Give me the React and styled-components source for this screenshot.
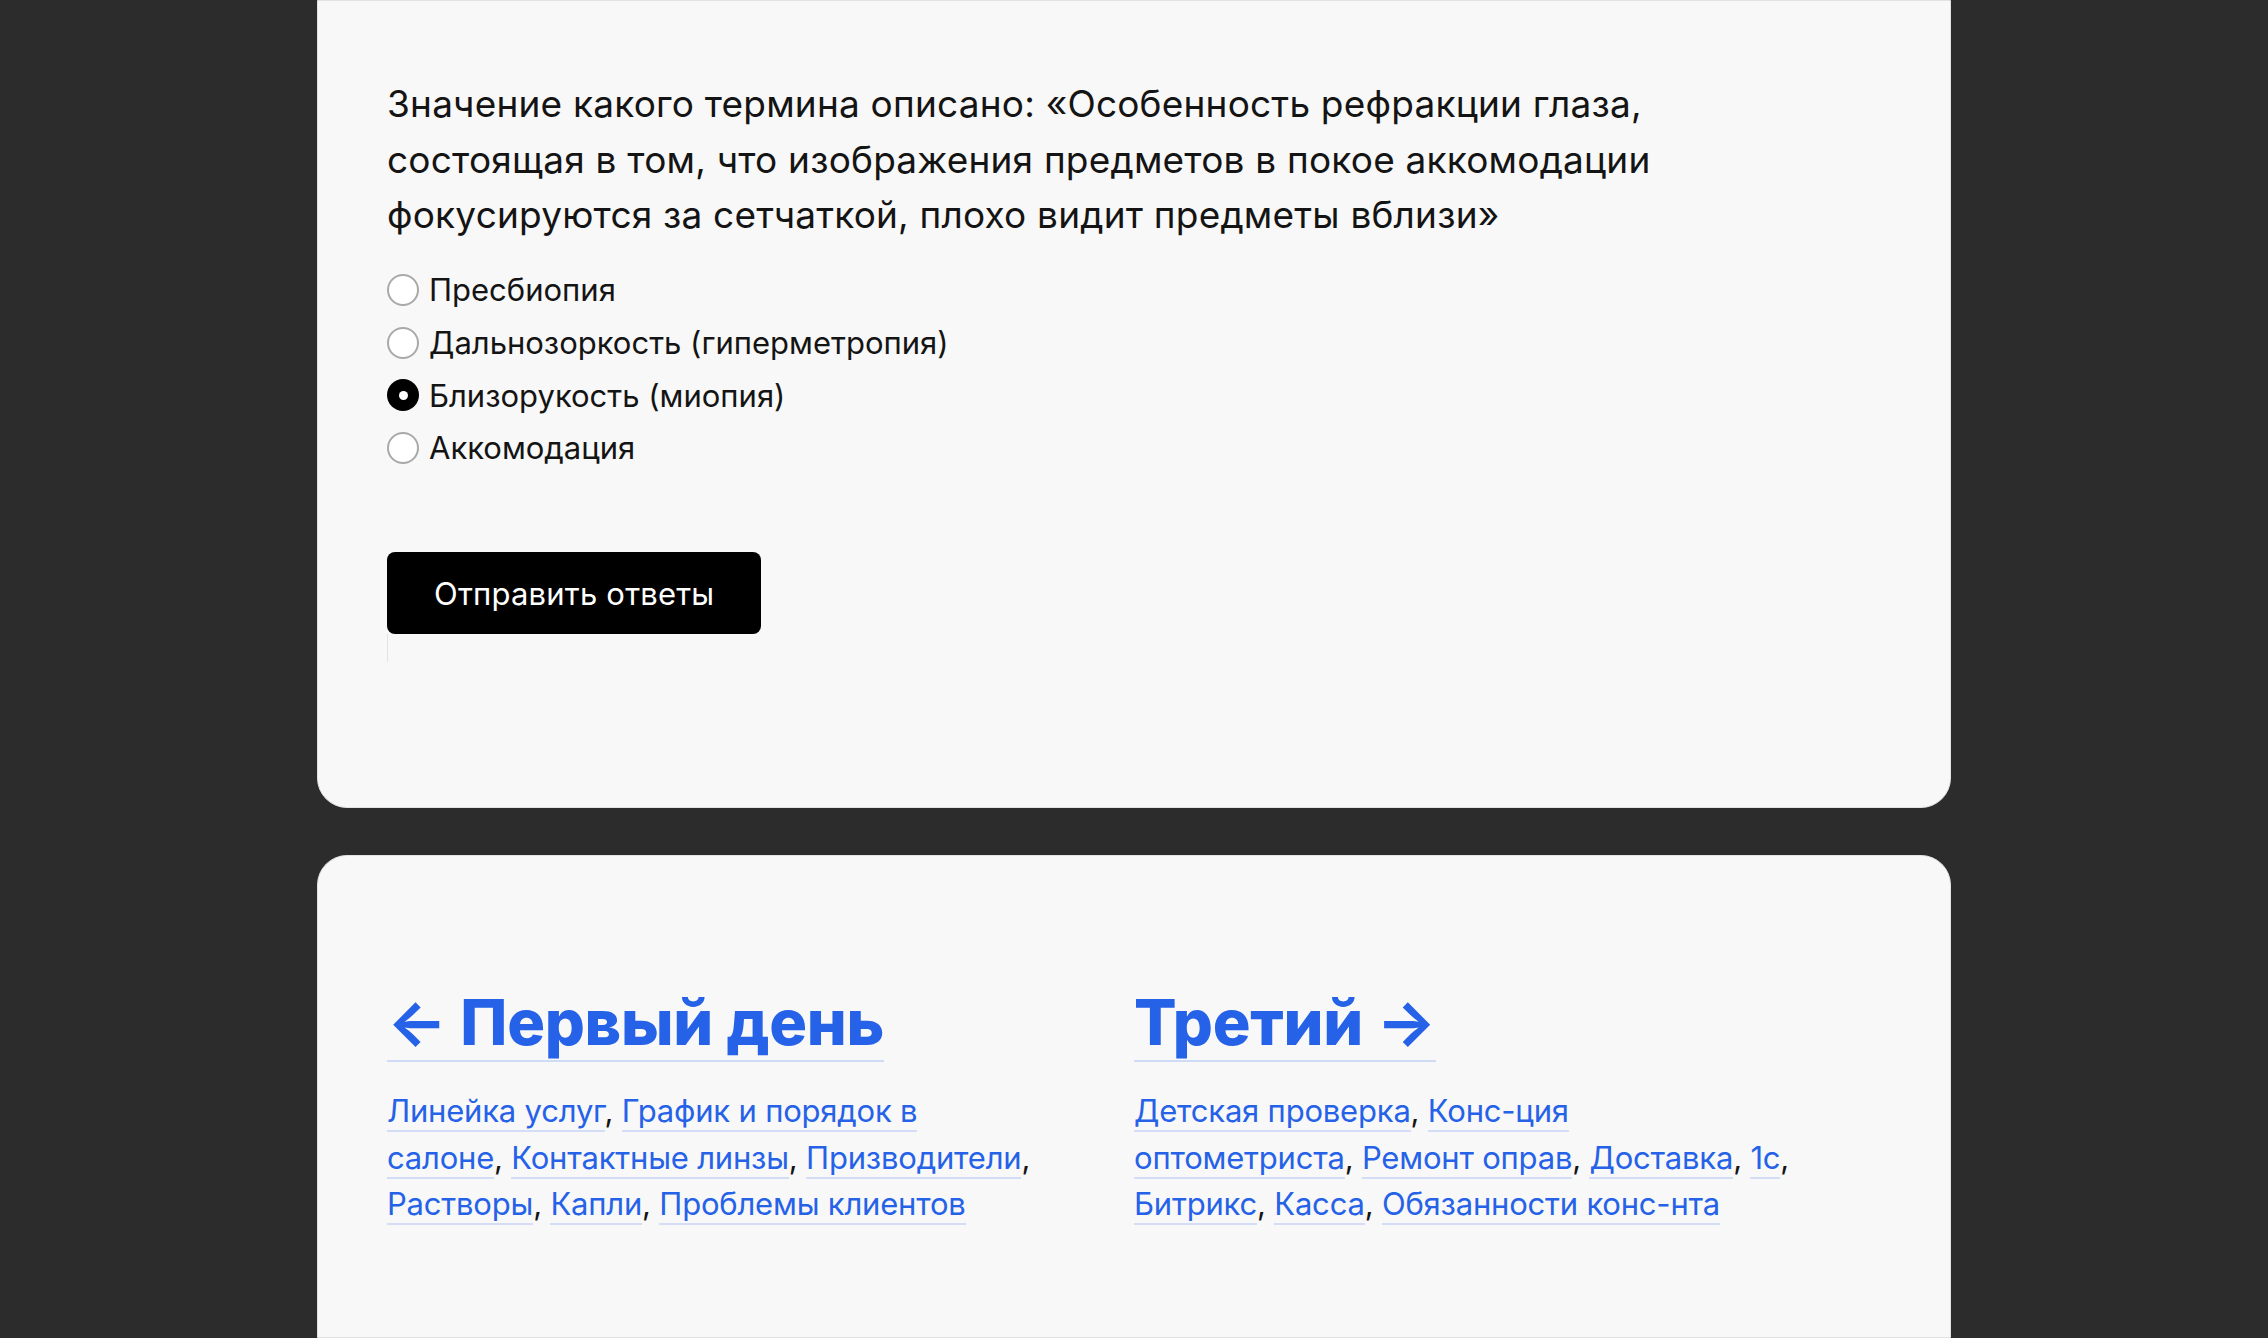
import React, { useState } from "react";
import styled, { createGlobalStyle } from "styled-components";

const GlobalStyle = createGlobalStyle`
  html, body {
    margin: 0;
    padding: 0;
    background: #2c2c2c;
  }
  body {
    font-family: Inter, "Noto Sans", "Liberation Sans", sans-serif;
    color: #141414;
    -webkit-font-smoothing: antialiased;
  }
`;

// --- Layout ---

const Page = styled.div`
  width: 1634px;
  margin: 0 auto;
  min-height: 1338px;
  display: flex;
  flex-direction: column;
  gap: 47px;
`;

const Card = styled.section`
  background: #f8f8f8;
  border: 1px solid #e2e2e2;
  border-radius: ${(p) => (p.$top ? "0 0 30px 30px" : "30px 30px 0 0")};
  padding: ${(p) => p.$padding};
  box-sizing: border-box;
  flex: ${(p) => (p.$grow ? 1 : "none")};
`;

// --- Quiz ---

const Question = styled.p`
  margin: 0 0 21px;
  font-size: 37px;
  line-height: 55.5px;
  max-width: 1350px;
  letter-spacing: 0.2px;
`;

const Options = styled.div`
  display: flex;
  flex-direction: column;
`;

const Option = styled.label`
  display: flex;
  align-items: center;
  gap: 10px;
  height: 52.7px;
  font-size: 31px;
  cursor: pointer;
`;

const Radio = styled.span`
  width: 32px;
  height: 32px;
  border-radius: 50%;
  box-sizing: border-box;
  flex: none;
  background: ${(p) => (p.$checked ? "#000" : "#fff")};
  border: ${(p) => (p.$checked ? "none" : "2px solid #a9a9a9")};
  display: flex;
  align-items: center;
  justify-content: center;

  &::after {
    content: "";
    display: ${(p) => (p.$checked ? "block" : "none")};
    width: 9px;
    height: 9px;
    border-radius: 50%;
    background: #fff;
  }
`;

const ButtonWrap = styled.div`
  margin-top: 78px;
  position: relative;
  display: inline-block;

  &::after {
    content: "";
    position: absolute;
    left: 0;
    top: 100%;
    width: 1px;
    height: 28px;
    background: #e3e3e3;
  }
`;

const SubmitButton = styled.button`
  height: 82px;
  padding: 0 47px;
  border: none;
  border-radius: 8px;
  background: #000;
  color: #fff;
  font-family: inherit;
  font-size: 31px;
  letter-spacing: 0.2px;
  cursor: pointer;
`;

// --- Navigation ---

const NavGrid = styled.div`
  display: grid;
  grid-template-columns: 747px 747px;
`;

const NavColumn = styled.div`
  display: flex;
  flex-direction: column;
  align-items: flex-start;
`;

const NavTitle = styled.a`
  display: inline-block;
  font-size: 63px;
  font-weight: 800;
  line-height: 72px;
  letter-spacing: -0.3px;
  color: #2562e8;
  text-decoration: none;
  padding-bottom: 2px;
  border-bottom: 2px solid #cfdcf7;
  margin-bottom: 26px;
`;

const Arrow = styled.span`
  font-weight: 700;
`;

const Topics = styled.p`
  margin: 0;
  font-size: 31px;
  line-height: 46.5px;
  letter-spacing: -0.2px;
  color: #141414;
`;

const Topic = styled.a`
  color: #2562e8;
  text-decoration: none;
  border-bottom: 2px solid #d3def6;
  padding-bottom: 1px;
`;

const options = [
  "Пресбиопия",
  "Дальнозоркость (гиперметропия)",
  "Близорукость (миопия)",
  "Аккомодация",
];

const App = () => {
  const [answer, setAnswer] = useState(2);

  return (
    <>
      <GlobalStyle />
      <Page>
        <Card $top $padding="75px 69px 173px">
          <Question>
            Значение какого термина описано: «Особенность рефракции глаза,
            <br />
            состоящая в том, что изображения предметов в покое аккомодации
            <br />
            фокусируются за сетчаткой, плохо видит предметы вблизи»
          </Question>
          <Options>
            {options.map((o, i) => (
              <Option key={o} onClick={() => setAnswer(i)}>
                <Radio $checked={answer === i} />
                {o}
              </Option>
            ))}
          </Options>
          <ButtonWrap>
            <SubmitButton>Отправить ответы</SubmitButton>
          </ButtonWrap>
        </Card>

        <Card $grow $padding="130px 69px 60px">
          <NavGrid>
            <NavColumn>
              <NavTitle href="#">
                <Arrow>←</Arrow> Первый день
              </NavTitle>
              <Topics>
                <Topic href="#">Линейка услуг</Topic>,{" "}
                <Topic href="#">График и порядок в</Topic>
                <br />
                <Topic href="#">салоне</Topic>,{" "}
                <Topic href="#">Контактные линзы</Topic>,{" "}
                <Topic href="#">Призводители</Topic>,
                <br />
                <Topic href="#">Растворы</Topic>,{" "}
                <Topic href="#">Капли</Topic>,{" "}
                <Topic href="#">Проблемы клиентов</Topic>
              </Topics>
            </NavColumn>
            <NavColumn>
              <NavTitle href="#">
                Третий <Arrow>→</Arrow>
              </NavTitle>
              <Topics>
                <Topic href="#">Детская проверка</Topic>,{" "}
                <Topic href="#">Конс-ция</Topic>
                <br />
                <Topic href="#">оптометриста</Topic>,{" "}
                <Topic href="#">Ремонт оправ</Topic>,{" "}
                <Topic href="#">Доставка</Topic>,{" "}
                <Topic href="#">1с</Topic>,
                <br />
                <Topic href="#">Битрикс</Topic>,{" "}
                <Topic href="#">Касса</Topic>,{" "}
                <Topic href="#">Обязанности конс-нта</Topic>
              </Topics>
            </NavColumn>
          </NavGrid>
        </Card>
      </Page>
    </>
  );
};

export default App;
